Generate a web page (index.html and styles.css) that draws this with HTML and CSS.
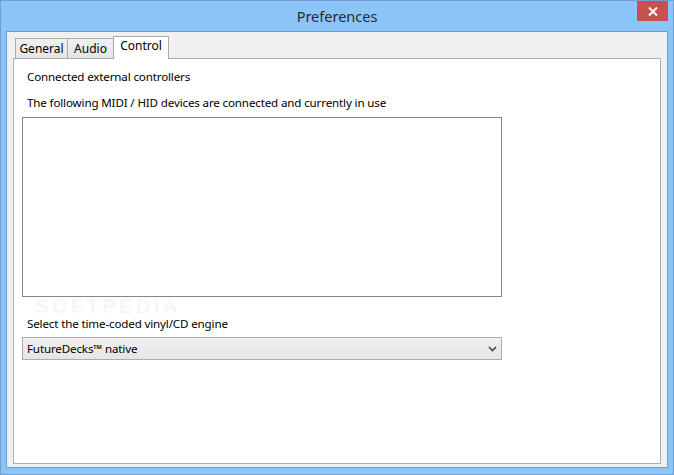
FILE: index.html
```html
<!DOCTYPE html>
<html>
<head>
<meta charset="utf-8">
<title>Preferences</title>
<link rel="stylesheet" href="styles.css">
</head>
<body>
<div class="window">
  <div class="titlebar">
    <span class="title">Preferences</span>
    <div class="close">
      <svg width="10" height="9" viewBox="0 0 10 9"><path d="M1 0.5 L9 8.5 M9 0.5 L1 8.5" stroke="#fff" stroke-width="2"/></svg>
    </div>
  </div>
  <div class="client">
    <div class="tabs">
      <div class="tab t-general">General</div>
      <div class="tab t-audio">Audio</div>
      <div class="tab t-control active">Control</div>
    </div>
    <div class="panel">
      <div class="label l1">Connected external controllers</div>
      <div class="label l2">The following MIDI / HID devices are connected and currently in use</div>
      <div class="listbox"></div>
      <div class="watermark">SOFTPEDIA</div>
      <div class="label l3">Select the time-coded vinyl/CD engine</div>
      <div class="combo">
        <span>FutureDecks™ native</span>
        <svg class="chev" width="9" height="6" viewBox="0 0 9 6"><path d="M1 1 L4.5 4.5 L8 1" stroke="#444" stroke-width="1.6" fill="none"/></svg>
      </div>
    </div>
  </div>
</div>
</body>
</html>
```
FILE: styles.css
```css
* { box-sizing: border-box; }
html, body { margin: 0; padding: 0; }
body { width: 674px; height: 475px; overflow: hidden; font-family: "Noto Sans", "Open Sans", sans-serif; }

.window {
  width: 674px;
  height: 475px;
  background: #8bc5f8;
  border: 1px solid #6f9fd3;
  display: flex;
  flex-direction: column;
}
.titlebar {
  position: relative;
  height: 30px;
  flex: none;
  display: flex;
  align-items: center;
  justify-content: center;
}
.title {
  font-size: 14.5px;
  color: #2b2b2b;
}
.close {
  position: absolute;
  right: 5px;
  top: 0;
  width: 31px;
  height: 20px;
  background: #c75050;
  display: flex;
  align-items: center;
  justify-content: center;
}
.client {
  margin: 0 5px 6px 5px;
  height: 437px;
  background: #f0f0f0;
  border: 1px solid #6c9cd2;
  padding: 4px 6px 3px 6px;
  display: flex;
  flex-direction: column;
}
.tabs {
  display: flex;
  align-items: flex-end;
  height: 22px;
  padding-left: 2px;
  flex: none;
  position: relative;
  z-index: 2;
}
.tab {
  height: 20px;
  border: 1px solid #acacac;
  border-bottom: none;
  background: linear-gradient(#f0f0f0, #e5e5e5);
  font-size: 12px;
  color: #000;
  display: flex;
  justify-content: center;
  padding-top: 2px;
  line-height: 16px;
}
.t-general { width: 53px; }
.t-audio { width: 47px; margin-left: -1px; }
.t-control {
  width: 56px;
  margin-left: -1px;
  height: 23px;
  margin-bottom: -1px;
  background: #fff;
  padding-top: 1px;
}
.panel {
  position: relative;
  flex: 1;
  background: #fff;
  border: 1px solid #acacac;
  padding: 10px 0 0 8px;
}
.label {
  font-size: 11.6px;
  letter-spacing: -0.15px;
  line-height: 16px;
  color: #000;
  padding-left: 5px;
  position: relative;
  z-index: 1;
}
.l2 { margin-top: 10px; }
.listbox {
  position: relative;
  z-index: 1;
  margin-top: 6px;
  width: 480px;
  height: 180px;
  border: 1px solid #828790;
  background: #fff;
}
.l3 { margin-top: 19px; }
.combo {
  margin-top: 5px;
  width: 480px;
  height: 23px;
  border: 1px solid #acacac;
  background: linear-gradient(#f0f0f0, #e5e5e5);
  display: flex;
  align-items: center;
  justify-content: space-between;
  padding: 0 4px 0 4px;
  font-size: 11.6px;
  letter-spacing: -0.15px;
  color: #000;
}
.chev { margin-top: 1px; }
.watermark {
  position: absolute;
  left: 21px;
  top: 240px;
  font-size: 20px;
  line-height: 14px;
  font-weight: bold;
  letter-spacing: 3.5px;
  color: #f6f6f6;
  font-family: "Liberation Sans", sans-serif;
  z-index: 0;
}
```
